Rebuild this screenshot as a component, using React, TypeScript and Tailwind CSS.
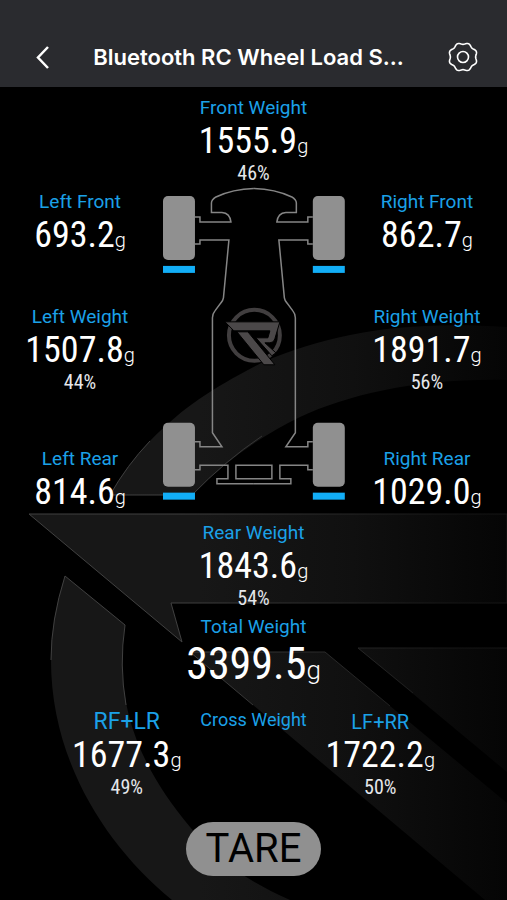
import { clsx } from "clsx";

type ReadingProps = {
    label: string;
    value: string;
    percent?: string;
    labelClass?: string;
    large?: boolean;
};

function Reading({ label, value, percent, labelClass = "text-[19px]", large }: ReadingProps) {
    return (
        <div className="flex flex-col items-center whitespace-nowrap">
            <h2 className={clsx("h-6 leading-6 text-[#1ba1e8]", labelClass)}>{label}</h2>
            <p
                className={clsx(
                    "font-['Roboto_Condensed',Roboto,sans-serif]",
                    large ? "h-[50px] text-[44px] leading-[50px]" : "h-[42px] text-[36px] leading-[42px]"
                )}
            >
                {value}
                <span className={clsx("font-['Roboto',sans-serif] font-light", large ? "text-[26px]" : "text-[20px]")}>g</span>
            </p>
            {percent && (
                <p className="h-[22px] text-[20px] leading-[22px] text-gray-200 font-['Roboto_Condensed',Roboto,sans-serif]">
                    {percent}
                </p>
            )}
        </div>
    );
}

// Scalloped gear rim with eight lobes
const gearPath =
    Array.from({ length: 96 }, (_, i) => {
        const a = (i / 96) * Math.PI * 2;
        const r = 13.5 - 0.9 * Math.cos(8 * a);
        return `${i === 0 ? "M" : "L"}${(16 + r * Math.cos(a)).toFixed(2)} ${(16 + r * Math.sin(a)).toFixed(2)}`;
    }).join("") + "Z";

function GearIcon() {
    return (
        <svg viewBox="0 0 32 32" className="h-8 w-8" fill="none" stroke="white" strokeWidth="1.6" strokeLinejoin="round">
            <path d={gearPath} />
            <circle cx="16" cy="16" r="5.5" />
        </svg>
    );
}

function Backdrop() {
    return (
        <svg
            viewBox="0 87 507 813"
            preserveAspectRatio="xMidYMin slice"
            className="absolute inset-0 h-full w-full"
            aria-hidden="true"
        >
            <defs>
                <linearGradient id="panel" gradientUnits="userSpaceOnUse" x1="200" y1="0" x2="507" y2="0">
                    <stop offset="0" stopColor="#171717" />
                    <stop offset="0.5" stopColor="#101010" />
                    <stop offset="1" stopColor="#050505" />
                </linearGradient>
                <linearGradient id="edge" gradientUnits="userSpaceOnUse" x1="180" y1="0" x2="460" y2="0">
                    <stop offset="0" stopColor="#404040" />
                    <stop offset="1" stopColor="#151515" />
                </linearGradient>
            </defs>
            <g fill="url(#panel)">
                <path d="M110 495Q127 465 150 441C185 405 215 387 263 362C330 334 400 320 507 327V380C420 378 350 394 300 417Q240 446 192 495Z" />
                <path d="M65 576Q51 620 51 660C51 760 105 845 172 900H290C240 878 213 855 190 827C140 767 113 705 125 625Z" />
                <path d="M190 652H325L507 803V900H485L253 705Z" />
                <path d="M29 514H507V603H171L182 642Z" stroke="url(#edge)" />
                <path d="M358 648H507V772Z" />
            </g>
            <g fill="none" stroke="url(#edge)">
                <path d="M150 441Q127 465 110 495H192Q225 461 262 436" />
                <path d="M51 660Q51 620 65 576L125 625Q119 665 126 705" />
                <path d="M253 705L190 652H325L390 706" />
                <path d="M507 648H358L413 693" />
            </g>
        </svg>
    );
}

// Half of the chassis; the other half is the same drawing mirrored
function ChassisSide() {
    return (
        <g>
            <g stroke="none">
                <rect x="163" y="196" width="32" height="64" rx="5" fill="#909090" />
                <rect x="163" y="266" width="32" height="7" fill="#12aef7" />
                <rect x="163" y="423" width="32" height="64" rx="5" fill="#909090" />
                <rect x="163" y="493" width="32" height="7" fill="#12aef7" />
            </g>
            <path d="M254 188.500Q233 189 216 197Q211.500 200 211.500 203V212.500H222Q230 213 231 222H200V217H195" />
            <path d="M195 244H200V240H229L223.500 298Q223 301 221 303L215 311Q212.500 314 212.500 318V433L222 447H200V442H195" />
            <path d="M195 470H200V465.500H228V479H217V484H254" />
        </g>
    );
}

function Chassis() {
    return (
        <svg viewBox="160 184 187 320" className="w-full self-start" role="img" aria-label="Chassis with four wheel scales">
            <g fill="none" stroke="#858585" strokeWidth="1.5">
                <ChassisSide />
                <g transform="translate(508 0) scale(-1 1)">
                    <ChassisSide />
                </g>
                <path d="M236 465.500H272V479H236Z" />
            </g>
            <g>
                <circle cx="254.500" cy="335.500" r="25.500" fill="none" stroke="#413e3f" strokeWidth="4" />
                <g fill="#4b4849" stroke="#000000">
                    <path d="M225 322H280L275 339Q274 343 270 343H265L276 353L272 356L256 338H268L270 331H234Z" />
                    <path d="M237 332H248L275 365H264Z" />
                </g>
            </g>
        </svg>
    );
}

export default function App() {
    return (
        <div className="flex min-h-screen flex-col bg-black text-white font-['Roboto',sans-serif]">
            <header className="flex h-[87px] shrink-0 items-end justify-between bg-[#2a2b2f] px-7 pb-[14px]">
                <button aria-label="Back" className="flex h-8 w-8 items-center justify-center">
                    <svg viewBox="0 0 28 28" className="h-7 w-7" fill="none" stroke="white" strokeWidth="2.5">
                        <path d="M18 4L8 14.500L18 25" />
                    </svg>
                </button>
                <h1 className="pr-[10px] text-[22px] leading-8 font-semibold font-['Inter',sans-serif]">
                    Bluetooth RC Wheel Load S...
                </h1>
                <button aria-label="Settings">
                    <GearIcon />
                </button>
            </header>

            <main className="relative grow">
                <Backdrop />

                <div className="relative flex flex-col pt-[9px] pb-6">
                    <Reading label="Front Weight" value="1555.9" percent="46%" />

                    {/* Left readings, chassis, right readings */}
                    <div className="grid grid-cols-[6fr_7fr_6fr]">
                        <div className="flex flex-col pt-[6px]">
                            <Reading label="Left Front" value="693.2" />
                            <div className="pt-[49px] pb-[54px]">
                                <Reading label="Left Weight" value="1507.8" percent="44%" />
                            </div>
                            <Reading label="Left Rear" value="814.6" />
                        </div>
                        <Chassis />
                        <div className="flex flex-col pt-[6px]">
                            <Reading label="Right Front" value="862.7" />
                            <div className="pt-[49px] pb-[54px]">
                                <Reading label="Right Weight" value="1891.7" percent="56%" />
                            </div>
                            <Reading label="Right Rear" value="1029.0" />
                        </div>
                    </div>

                    <div className="flex flex-col gap-[6px] pt-2">
                        <Reading label="Rear Weight" value="1843.6" percent="54%" />
                        <Reading label="Total Weight" value="3399.5" large />
                    </div>

                    <div className="grid grid-cols-3 px-[12.5%] pt-[21px]">
                        <Reading label="RF+LR" value="1677.3" percent="49%" labelClass="text-[23px]" />
                        <h2 className="text-center text-[18px] leading-5 whitespace-nowrap text-[#1ba1e8]">Cross Weight</h2>
                        <Reading label="LF+RR" value="1722.2" percent="50%" labelClass="text-[20px]" />
                    </div>

                    <button className="mt-6 self-center rounded-full bg-[#909090] px-5 text-[40px] leading-[54px] text-black">
                        TARE
                    </button>
                </div>
            </main>
        </div>
    );
}
